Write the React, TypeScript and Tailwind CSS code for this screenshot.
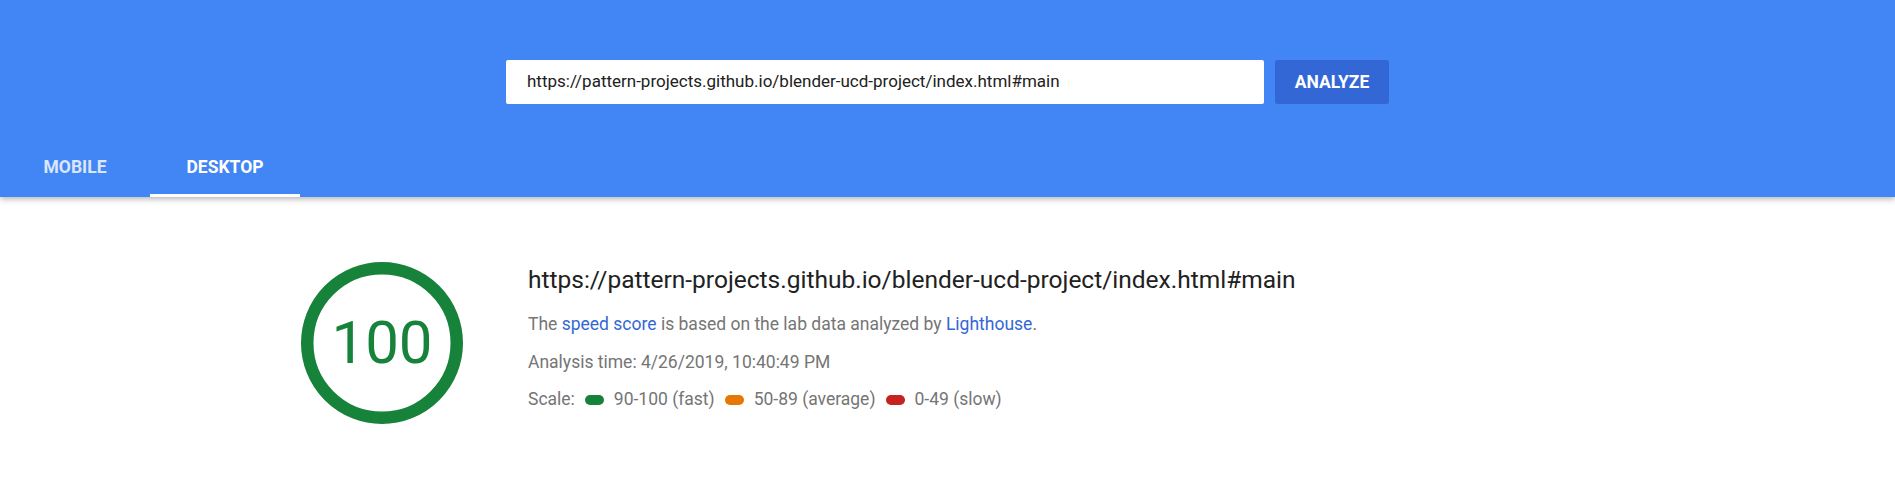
import React from "react";

function Pill({ color }: { color: string }) {
  return <span className={`inline-block h-[10px] w-[19px] rounded-full ${color}`} />;
}

export default function App() {
  return (
    <div className="min-h-[477px] bg-white" style={{ fontFamily: "Roboto, 'Liberation Sans', sans-serif" }}>
      <header className="relative z-10 h-[197px] bg-[#4285f4] shadow-[0_2px_6px_rgba(0,0,0,0.3)] flex flex-col">
        <div className="flex justify-center gap-[11px] pt-[60px]">
          <div className="w-[758px] h-[44px] bg-white rounded-[2px] flex items-center pl-[21px] text-[17px] text-[#212121]">
            https://pattern-projects.github.io/blender-ucd-project/index.html#main
          </div>
          <button className="w-[114px] h-[44px] bg-[#3367d6] rounded-[2px] text-white font-bold text-[17.5px] uppercase flex items-center justify-center">
            Analyze
          </button>
        </div>
        <div className="mt-auto flex h-[60px]">
          <div className="w-[150px] flex items-center justify-center text-[17.5px] font-bold text-white/80">MOBILE</div>
          <div className="relative w-[150px] flex items-center justify-center text-[17.5px] font-bold text-white">
            DESKTOP
            <span className="absolute bottom-0 left-0 right-0 h-[3px] bg-white" />
          </div>
        </div>
      </header>
      <main className="w-[1293px] mx-auto pt-[65px] flex items-start gap-[65px]">
        <div className="relative w-[162px] h-[162px] shrink-0">
          <svg width="162" height="162" viewBox="0 0 162 162" className="absolute inset-0">
            <circle cx="81" cy="81" r="74.75" fill="none" stroke="#178239" strokeWidth="12.5" />
          </svg>
          <div className="absolute inset-0 flex items-center justify-center text-[60px] text-[#178239] leading-none">100</div>
        </div>
        <div className="pt-[3px]">
          <div className="text-[24.5px] leading-[30px] text-[#212121]">
            https://pattern-projects.github.io/blender-ucd-project/index.html#main
          </div>
          <div className="mt-[9.5px] text-[17.5px] leading-[38px] text-[#757575]">
            The <span className="text-[#3367d6]">speed score</span> is based on the lab data analyzed by{" "}
            <span className="text-[#3367d6]">Lighthouse</span>.
          </div>
          <div className="text-[17.5px] leading-[38px] text-[#757575]">Analysis time: 4/26/2019, 10:40:49 PM</div>
          <div className="h-[38px] flex items-center text-[17.5px] text-[#757575]">
            <span>Scale:</span>
            <span className="ml-[10px] mr-[10px] flex"><Pill color="bg-[#178239]" /></span>
            <span>90-100 (fast)</span>
            <span className="ml-[10px] mr-[10px] flex"><Pill color="bg-[#e67700]" /></span>
            <span>50-89 (average)</span>
            <span className="ml-[10px] mr-[10px] flex"><Pill color="bg-[#c7221f]" /></span>
            <span>0-49 (slow)</span>
          </div>
        </div>
      </main>
    </div>
  );
}
